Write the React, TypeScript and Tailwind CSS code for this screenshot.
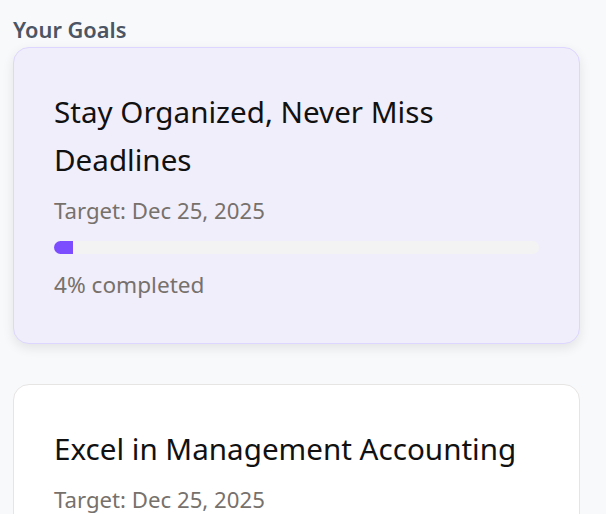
import React from "react";

const goals = [
  { title: "Stay Organized, Never Miss Deadlines", target: "Dec 25, 2025", progress: 4, active: true },
  { title: "Excel in Management Accounting", target: "Dec 25, 2025", progress: 0, active: false },
];

export default function App() {
  return (
    <div
      className="min-h-screen bg-[#f8f9fb] px-[13px] pt-[17px] pr-[26px]"
      style={{ fontFamily: '"Noto Sans", "Open Sans", sans-serif' }}
    >
      <h2 className="text-[21.8px] leading-[26px] font-semibold text-[#4b5563] mb-[4px]">Your Goals</h2>
      <div className="flex flex-col gap-[40px]">
        {goals.map((g, i) => (
          <div
            key={i}
            className={
              g.active
                ? "rounded-[16px] border border-[#ddd6fe] bg-[#f1eefb] shadow-[0_4px_12px_rgba(0,0,0,0.09)] px-[40px] pt-[40px] pb-[44px]"
                : "rounded-[16px] border border-[#e7e5e4] bg-white px-[40px] pt-[40px] pb-[44px]"
            }
          >
            <h3 className="text-[29.6px] leading-[48px] text-[#111111]">{g.title}</h3>
            <p className="text-[22.2px] leading-[28px] text-[#77716c] mt-[13px]">Target: {g.target}</p>
            {g.active && (
              <>
                <div className="mt-[16px] h-[13px] w-full rounded-full bg-[#f3f3f3] overflow-hidden">
                  <div className="h-full bg-[#7c4dff]" style={{ width: `${g.progress}%` }} />
                </div>
                <p className="text-[22.6px] leading-[28px] text-[#77716c] mt-[17px]">{g.progress}% completed</p>
              </>
            )}
          </div>
        ))}
      </div>
    </div>
  );
}
